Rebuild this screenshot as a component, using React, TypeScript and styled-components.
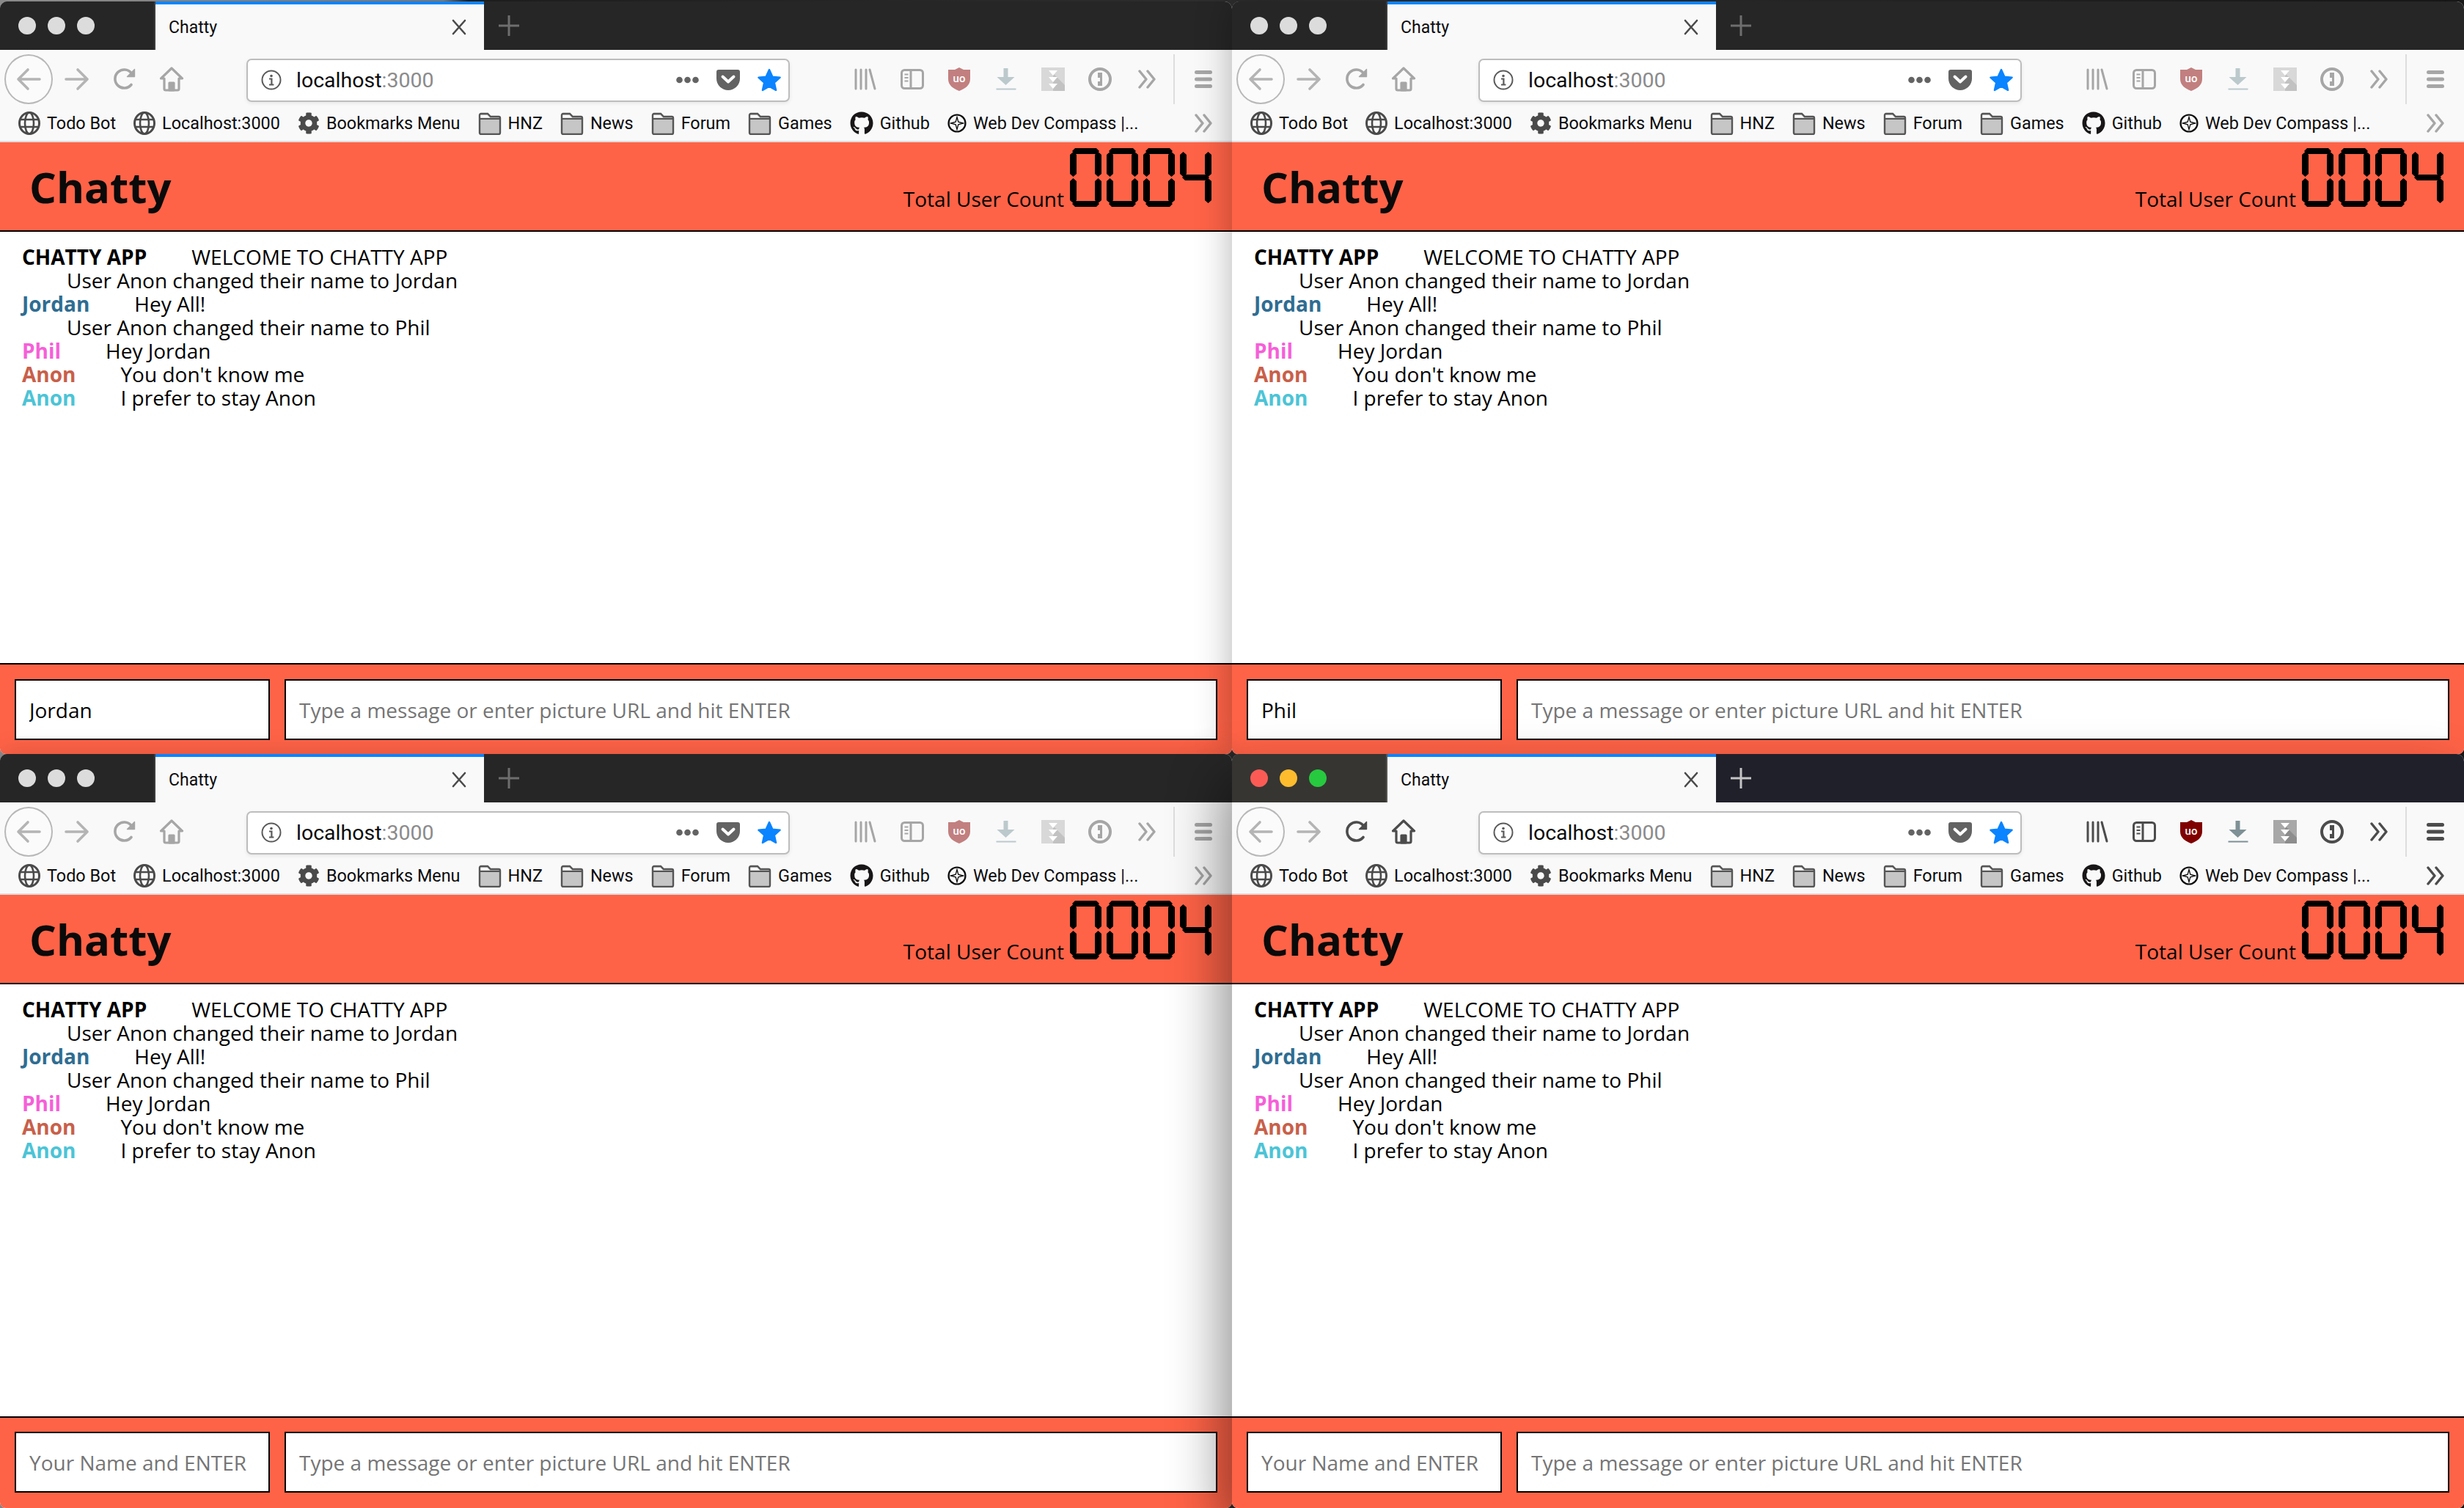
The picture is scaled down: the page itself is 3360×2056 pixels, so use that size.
import styled, { createGlobalStyle } from "styled-components";
import { FaCog, FaGithub } from "react-icons/fa";

const GlobalStyle = createGlobalStyle`
  html, body { margin: 0; padding: 0; background: #2c2c2c; }
  * { box-sizing: border-box; }
`;

const chromeFont = `Roboto, "Liberation Sans", sans-serif`;
const appFont = `"Open Sans", "Noto Sans", sans-serif`;

type Active = { $active?: boolean };

const Desktop = styled.div`
  width: 3360px;
  height: 2056px;
  overflow: hidden;
  display: grid;
  grid-template-columns: 1680px 1680px;
  grid-template-rows: 1026px 1028px;
  padding-top: 2px;
  background: linear-gradient(90deg, #8a8a8a 0, #777 18%, #1d1d1d 19%, #333 60%, #1a1a1a 100%);
`;

const Shadowed = styled.div<{ $shadow: string }>`
  position: relative;
  min-height: 0;
  display: flex;
  border-radius: 10px 10px 8px 8px;
  box-shadow: ${(p) => p.$shadow};
`;

const WinFrame = styled.div`
  flex: 1;
  min-width: 0;
  display: flex;
  flex-direction: column;
  overflow: hidden;
  background: #fff;
  border-radius: 10px 10px 8px 8px;
`;

const TabBar = styled.div<Active>`
  height: 66px;
  flex: none;
  display: flex;
  background: ${(p) => (p.$active ? "#20202b" : "#262626")};
`;

const Lights = styled.div<Active>`
  width: 212px;
  display: flex;
  align-items: center;
  gap: 16px;
  padding: 0 0 0 25px;
  background: ${(p) => (p.$active ? "#363532" : "#262626")};
  border-right: 2px solid ${(p) => (p.$active ? "#55544f" : "#3c3c3c")};
`;

const Light = styled.span<{ $color: string }>`
  width: 24px;
  height: 24px;
  border-radius: 50%;
  background: ${(p) => p.$color};
`;

const Tab = styled.div`
  width: 448px;
  border-top: 4px solid #0a84ff;
  background: #f9f9fa;
  display: flex;
  align-items: center;
  justify-content: space-between;
  padding: 0 24px 0 18px;
  font: 400 23px ${chromeFont};
  color: #0c0c0d;
`;

const NewTab = styled.div<Active>`
  width: 68px;
  display: flex;
  align-items: center;
  justify-content: center;
  color: ${(p) => (p.$active ? "#c4c4c4" : "#6e6e6e")};
`;

const NavBar = styled.div`
  height: 80px;
  flex: none;
  display: flex;
  align-items: center;
  padding-left: 6px;
  background: #f9f9fa;
`;

const BackButton = styled.div`
  width: 66px;
  height: 68px;
  border-radius: 50%;
  border: 2px solid #b8b8b8;
  background: #fbfbfb;
  color: #b4b4b4;
  display: flex;
  align-items: center;
  justify-content: center;
`;

const NavSlot = styled.div<{ $width: number; $color?: string }>`
  width: ${(p) => p.$width}px;
  height: 66px;
  flex: none;
  display: flex;
  align-items: center;
  justify-content: center;
  color: ${(p) => p.$color ?? "inherit"};
`;

const UrlBar = styled.div`
  width: 741px;
  height: 59px;
  flex: none;
  margin: 2px 0 0 72px;
  display: flex;
  align-items: center;
  padding: 0 10px 0 18px;
  background: #fff;
  border: 2px solid #bdbdbd;
  border-radius: 7px;
  box-shadow: 0 2px 5px rgba(0, 0, 0, 0.08);
`;

const UrlText = styled.div`
  margin-left: 20px;
  font: 400 28.5px ${chromeFont};
  color: #0c0c0d;
  flex: 1;
  span { color: #8b8b8b; }
`;

const UrlIcons = styled.div`
  display: flex;
  align-items: center;
  gap: 24px;
  color: #636363;
`;

const ToolIcons = styled.div<Active>`
  display: flex;
  align-items: center;
  margin-left: 71px;
  color: ${(p) => (p.$active ? "#4c4c4c" : "#a6a6a6")};
`;

const Divider = styled.div`
  width: 2px;
  height: 68px;
  margin-left: 4px;
  background: #dedede;
`;

const Bookmarks = styled.div<Active>`
  height: 46px;
  flex: none;
  display: flex;
  align-items: center;
  gap: 24px;
  padding: 0 0 4px 25px;
  background: #f9f9fa;
  border-bottom: 2px solid #dcdcdc;
  color: ${(p) => (p.$active ? "#4c4c4c" : "#a6a6a6")};
`;

const Bookmark = styled.div`
  display: flex;
  align-items: center;
  gap: 9px;
  font: 400 23.4px ${chromeFont};
  color: #0c0c0d;
  white-space: nowrap;
`;

const BookmarkIcon = styled.span`
  display: flex;
  color: #4a4a4a;
`;

const MoreMarks = styled.div`
  margin-left: auto;
  padding-right: 26px;
  display: flex;
`;

const Header = styled.header`
  height: 122px;
  flex: none;
  display: flex;
  justify-content: space-between;
  padding: 8px 28px 0 40px;
  background: #ff6347;
  border-bottom: 2px solid #000;
`;

const Title = styled.h1`
  margin: 0 0 6px;
  align-self: center;
  font: 700 58px/1 ${appFont};
  color: #0a0a0a;
`;

const Counter = styled.div`
  display: flex;
  align-items: flex-start;
`;

const CountLabel = styled.span`
  margin: 51px 8px 0 0;
  font: 400 28px/36px ${appFont};
  color: #000;
`;

const Digits = styled.div`
  display: flex;
  gap: 7px;
`;

const Digit = styled.div`
  width: 43px;
  height: 80px;
  display: grid;
  grid-template-columns: 9px 25px 9px;
  grid-template-rows: 8px 28px 8px 28px 8px;
`;

const hSegment = "polygon(4px 0, calc(100% - 4px) 0, 100% 50%, calc(100% - 4px) 100%, 4px 100%, 0 50%)";
const vSegment = "polygon(50% 0, 100% 4px, 100% calc(100% - 4px), 50% 100%, 0 calc(100% - 4px), 0 4px)";

const Segment = styled.i<{ $area: string; $vertical?: boolean }>`
  grid-area: ${(p) => p.$area};
  background: #000;
  margin: ${(p) => (p.$vertical ? "5px 0 5px" : "0 3px")};
  clip-path: ${(p) => (p.$vertical ? vSegment : hSegment)};
`;

const SEGMENT_AREAS: Record<string, [string, boolean]> = {
  a: ["1 / 1 / 2 / 4", false],
  b: ["1 / 3 / 4 / 4", true],
  c: ["3 / 3 / 6 / 4", true],
  d: ["5 / 1 / 6 / 4", false],
  e: ["3 / 1 / 6 / 2", true],
  f: ["1 / 1 / 4 / 2", true],
  g: ["3 / 1 / 4 / 4", false],
};

const DIGIT_SEGMENTS: Record<string, string> = { "0": "abcdef", "4": "bcfg" };

function Lcd({ value }: { value: string }) {
  return (
    <Digits role="img" aria-label={value}>
      {value.split("").map((d, i) => (
        <Digit key={i}>
          {DIGIT_SEGMENTS[d].split("").map((s) => (
            <Segment key={s} $area={SEGMENT_AREAS[s][0]} $vertical={SEGMENT_AREAS[s][1]} />
          ))}
        </Digit>
      ))}
    </Digits>
  );
}

const Messages = styled.main`
  flex: 1;
  min-height: 0;
  padding: 18px 0 0 30px;
  background: #fff;
  font: 400 28px/32px ${appFont};
  color: #000;
`;

const Line = styled.div<{ $system?: boolean }>`
  height: 32px;
  white-space: nowrap;
  padding-left: ${(p) => (p.$system ? "61px" : "0")};
`;

const UserName = styled.span<{ $color: string }>`
  display: inline-block;
  margin-right: 61px;
  font-weight: 700;
  color: ${(p) => p.$color};
`;

const Footer = styled.footer<{ $lower?: boolean }>`
  height: ${(p) => (p.$lower ? "125px" : "124px")};
  flex: none;
  display: flex;
  gap: 20px;
  padding: ${(p) => (p.$lower ? "19px 20px 21px" : "20px 20px 19px")};
  background: #ff6347;
  border-top: 2px solid #000;
`;

const Field = styled.input<{ $grow?: boolean }>`
  width: ${(p) => (p.$grow ? "auto" : "348px")};
  flex: ${(p) => (p.$grow ? "1" : "none")};
  min-width: 0;
  height: 83px;
  padding: 0 18px;
  border: 2px solid #000;
  border-radius: 0;
  background: #fff;
  outline: none;
  font: 400 28px ${appFont};
  color: #000;
  &::placeholder { color: #757575; opacity: 1; }
`;

function Globe() {
  return (
    <svg width="30" height="32" viewBox="0 0 30 32" fill="none" stroke="currentColor" strokeWidth="2.6">
      <ellipse cx="15" cy="16" rx="13.5" ry="14.5" strokeWidth="3" />
      <ellipse cx="15" cy="16" rx="6" ry="14.5" />
      <path d="M2 11h26M2 21h26" />
    </svg>
  );
}

function Folder() {
  return (
    <svg width="32" height="32" viewBox="0 0 32 32">
      <path
        d="M2 29V5a2 2 0 0 1 2-2h9l4 4h11a2 2 0 0 1 2 2v20a2 2 0 0 1-2 2H4a2 2 0 0 1-2-2z"
        fill="#c6c6c6"
        stroke="#555"
        strokeWidth="2.4"
      />
      <path d="M3 10h27" stroke="#555" strokeWidth="2" />
      <path d="M3.4 8.6V5h9l3.6 3.6z" fill="#f9f9fa" />
    </svg>
  );
}

function Compass() {
  return (
    <svg width="26" height="26" viewBox="0 0 26 26">
      <circle cx="13" cy="13" r="11.5" fill="none" stroke="#0c0c0d" strokeWidth="2.2" />
      <path d="M13 4.500l1.800 6.700 6.700 1.800-6.700 1.800-1.800 6.700-1.800-6.700-6.700-1.800 6.700-1.800z" fill="none" stroke="#0c0c0d" strokeWidth="1.3" />
    </svg>
  );
}

function Chevrons({ size = 26 }: { size?: number }) {
  return (
    <svg width={size} height="26" viewBox="0 0 26 26" fill="none" stroke="currentColor" strokeWidth="3.4" strokeLinecap="round" strokeLinejoin="round">
      <path d="M3 2l9 11-9 11M14 2l9 11-9 11" />
    </svg>
  );
}

function Arrow({ back }: { back?: boolean }) {
  return (
    <svg width="34" height="32" viewBox="0 0 34 32" fill="none" stroke="currentColor" strokeWidth="3.6" strokeLinecap="round" strokeLinejoin="round" style={back ? { transform: "scaleX(-1)" } : undefined}>
      <path d="M2 16h29M18 3l13 13-13 13" />
    </svg>
  );
}

function Reload() {
  return (
    <svg width="32" height="32" viewBox="0 0 32 32" fill="none" stroke="currentColor" strokeWidth="3.6" strokeLinecap="round">
      <path d="M24 23.5A12.5 12.5 0 1 1 24 7.5l2 2" />
      <path d="M28.5 2.5v10h-10z" fill="currentColor" strokeWidth="1.4" strokeLinejoin="round" />
    </svg>
  );
}

function Home() {
  return (
    <svg width="34" height="34" viewBox="0 0 34 34" fill="none" stroke="currentColor" strokeWidth="3.2" strokeLinejoin="round">
      <path d="M2.5 16L17 2l14.5 14h-4.5v14a2 2 0 0 1-2 2H9a2 2 0 0 1-2-2V16z" />
      <path d="M14 32V22h6v10z" fill="currentColor" />
    </svg>
  );
}

function Info() {
  return (
    <svg width="28" height="28" viewBox="0 0 28 28" fill="none" stroke="#5a5a5a" strokeWidth="2">
      <circle cx="14" cy="14" r="12.5" />
      <circle cx="14" cy="8.5" r="1.8" fill="#5a5a5a" stroke="none" />
      <path d="M11 12.5h3.4V20M11 20.5h6.4" strokeWidth="2.2" />
    </svg>
  );
}

function Dots() {
  return (
    <svg width="31" height="10" viewBox="0 0 31 10" fill="currentColor">
      <circle cx="4.5" cy="5" r="4.3" />
      <circle cx="15.5" cy="5" r="4.3" />
      <circle cx="26.5" cy="5" r="4.3" />
    </svg>
  );
}

function Pocket() {
  return (
    <svg width="32" height="28" viewBox="0 0 32 28">
      <path d="M3 0h26a3 3 0 0 1 3 3v9a16 16 0 0 1-32 0V3a3 3 0 0 1 3-3z" fill="currentColor" />
      <path d="M8.5 9.5L16 16.5l7.500-7" fill="none" stroke="#fff" strokeWidth="4" strokeLinecap="round" strokeLinejoin="round" />
    </svg>
  );
}

function Star() {
  return (
    <svg width="32" height="32" viewBox="0 0 32 32" fill="#0a84ff" stroke="#0a84ff" strokeWidth="2.4" strokeLinejoin="round">
      <path d="M16 2l4.300 9.600 10.300 1.100-7.700 7 2.200 10.200L16 24.700 6.900 29.900l2.200-10.200-7.700-7 10.300-1.100z" />
    </svg>
  );
}

function Library() {
  return (
    <svg width="30" height="30" viewBox="0 0 30 30" fill="none" stroke="currentColor" strokeWidth="3" strokeLinecap="round">
      <path d="M2 2v26M9 2v26M16 2v26M21 2l7 26" />
    </svg>
  );
}

function Sidebar() {
  return (
    <svg width="32" height="28" viewBox="0 0 32 28" fill="none" stroke="currentColor" strokeWidth="3">
      <rect x="1.500" y="1.500" width="29" height="25" rx="4" />
      <path d="M14 2v24" />
      <path d="M5.500 7.500h5M5.500 12h5M5.500 16.500h5" strokeWidth="2.200" />
    </svg>
  );
}

function Ublock({ active }: { active?: boolean }) {
  return (
    <svg width="30" height="32" viewBox="0 0 30 32">
      <path d="M15 0l6 3 9 0v13c0 8-7 13-15 16C7 29 0 24 0 16V3h9z" fill={active ? "#800000" : "#c27f7f"} />
      <text x="15" y="20" textAnchor="middle" fontFamily="Roboto, sans-serif" fontSize="15" fontWeight="500" fill="#fff">
        uo
      </text>
    </svg>
  );
}

function Download({ active }: { active?: boolean }) {
  return (
    <svg width="28" height="30" viewBox="0 0 28 30" fill={active ? "#7f9196" : "#bcc9cc"}>
      <path d="M10.500 0h6v12h9L13.500 23 1.500 12h9z" />
      <rect x="0.500" y="27.500" width="27" height="2" />
    </svg>
  );
}

function Zip({ active }: { active?: boolean }) {
  const bg = active ? "#a8a8a8" : "#d8d8d8";
  const dark = active ? "#8d8d8d" : "#c2c2c2";
  return (
    <svg width="32" height="32" viewBox="0 0 32 32">
      <rect width="32" height="32" fill={bg} />
      <path d="M16 8l16 16v8H16z" fill={dark} />
      <path d="M10 4h12l-6 7zM10 13h12l-6 7zM10 22h12l-6 7z" fill="#fff" />
    </svg>
  );
}

function OnePassword() {
  return (
    <svg width="32" height="32" viewBox="0 0 32 32">
      <circle cx="16" cy="16" r="14" fill="#f9f9fa" stroke="currentColor" strokeWidth="4" />
      <path d="M13 7h6v18h-6v-6h3v-5h-3z" fill="currentColor" />
    </svg>
  );
}

function Hamburger() {
  return (
    <svg width="24" height="24" viewBox="0 0 24 24" fill="currentColor">
      <rect y="0" width="24" height="5" rx="2.500" />
      <rect y="9.500" width="24" height="5" rx="2.500" />
      <rect y="19" width="24" height="5" rx="2.500" />
    </svg>
  );
}

function CloseX() {
  return (
    <svg width="20" height="22" viewBox="0 0 20 22" stroke="#4a4a4a" strokeWidth="2.600" strokeLinecap="round">
      <path d="M2 2l16 18M18 2L2 20" />
    </svg>
  );
}

function Plus() {
  return (
    <svg width="30" height="30" viewBox="0 0 30 30" stroke="currentColor" strokeWidth="3">
      <path d="M15 1v28M1 15h28" />
    </svg>
  );
}

const bookmarkItems = [
  { label: "Todo Bot", icon: <Globe /> },
  { label: "Localhost:3000", icon: <Globe /> },
  { label: "Bookmarks Menu", icon: <FaCog size={30} /> },
  { label: "HNZ", icon: <Folder /> },
  { label: "News", icon: <Folder /> },
  { label: "Forum", icon: <Folder /> },
  { label: "Games", icon: <Folder /> },
  { label: "Github", icon: <FaGithub size={32} color="#181616" /> },
  { label: "Web Dev Compass |...", icon: <Compass /> },
];

const chat = [
  { user: "CHATTY APP", color: "#000", text: "WELCOME TO CHATTY APP" },
  { text: "User Anon changed their name to Jordan" },
  { user: "Jordan", color: "#2f6d92", text: "Hey All!" },
  { text: "User Anon changed their name to Phil" },
  { user: "Phil", color: "#f65fd8", text: "Hey Jordan" },
  { user: "Anon", color: "#c8604a", text: "You don't know me" },
  { user: "Anon", color: "#4cc4d6", text: "I prefer to stay Anon" },
];

type WindowProps = {
  name?: string;
  active?: boolean;
  lower?: boolean;
  shadow: string;
};

function ChattyWindow({ name, active, lower, shadow }: WindowProps) {
  return (
    <Shadowed $shadow={shadow}>
      <WinFrame>
        <TabBar $active={active}>
          <Lights $active={active}>
            <Light $color={active ? "#fc5b55" : "#dcdcdc"} />
            <Light $color={active ? "#fdbc2e" : "#dcdcdc"} />
            <Light $color={active ? "#27c93f" : "#dcdcdc"} />
          </Lights>
          <Tab>
            Chatty
            <CloseX />
          </Tab>
          <NewTab $active={active}>
            <Plus />
          </NewTab>
        </TabBar>
        <NavBar>
          <BackButton>
            <Arrow back />
          </BackButton>
          <NavSlot $width={66} $color="#b4b4b4">
            <Arrow />
          </NavSlot>
          <NavSlot $width={66} $color={active ? "#4c4c4c" : "#a6a6a6"}>
            <Reload />
          </NavSlot>
          <NavSlot $width={60} $color={active ? "#4c4c4c" : "#a6a6a6"}>
            <Home />
          </NavSlot>
          <UrlBar>
            <Info />
            <UrlText>
              localhost<span>:3000</span>
            </UrlText>
            <UrlIcons>
              <Dots />
              <Pocket />
              <Star />
            </UrlIcons>
          </UrlBar>
          <ToolIcons $active={active}>
            <NavSlot $width={64}><Library /></NavSlot>
            <NavSlot $width={64}><Sidebar /></NavSlot>
            <NavSlot $width={64}><Ublock active={active} /></NavSlot>
            <NavSlot $width={64}><Download active={active} /></NavSlot>
            <NavSlot $width={64}><Zip active={active} /></NavSlot>
            <NavSlot $width={64}><OnePassword /></NavSlot>
            <NavSlot $width={64}><Chevrons /></NavSlot>
            <Divider />
            <NavSlot $width={78}><Hamburger /></NavSlot>
          </ToolIcons>
        </NavBar>
        <Bookmarks $active={active}>
          {bookmarkItems.map((b) => (
            <Bookmark key={b.label}>
              <BookmarkIcon>{b.icon}</BookmarkIcon>
              {b.label}
            </Bookmark>
          ))}
          <MoreMarks>
            <Chevrons />
          </MoreMarks>
        </Bookmarks>
        <Header>
          <Title>Chatty</Title>
          <Counter>
            <CountLabel>Total User Count</CountLabel>
            <Lcd value="0004" />
          </Counter>
        </Header>
        <Messages>
          {chat.map((m, i) => (
            <Line key={i} $system={!m.user}>
              {m.user && <UserName $color={m.color}>{m.user}</UserName>}
              {m.text}
            </Line>
          ))}
        </Messages>
        <Footer $lower={lower}>
          <Field placeholder="Your Name and ENTER" defaultValue={name} />
          <Field $grow placeholder="Type a message or enter picture URL and hit ENTER" />
        </Footer>
      </WinFrame>
    </Shadowed>
  );
}

export default function App() {
  return (
    <>
      <GlobalStyle />
      <Desktop>
        <ChattyWindow name="Jordan" shadow="none" />
        <ChattyWindow name="Phil" shadow="0 0 50px rgba(0,0,0,0.3)" />
        <ChattyWindow lower shadow="0 0 36px rgba(0,0,0,0.16)" />
        <ChattyWindow lower active shadow="-15px 30px 70px rgba(0,0,0,0.42)" />
      </Desktop>
    </>
  );
}
